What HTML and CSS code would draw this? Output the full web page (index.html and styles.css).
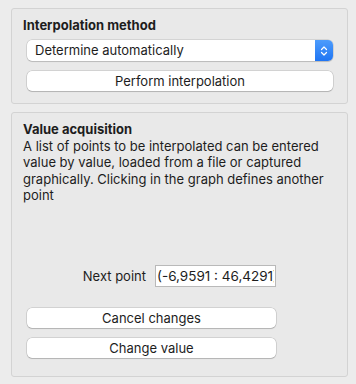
FILE: index.html
```html
<!DOCTYPE html>
<html>

<head>
  <meta charset="UTF-8">
  <title>Interpolation</title>
  <link rel="stylesheet" href="styles.css">
</head>

<body>
  <div class="wrapper">
    <div class="group method">
      <div class="group-title">Interpolation method</div>
      <div class="controls">
        <div class="select">
          <span class="select-value">Determine automatically</span>
          <span class="stepper">
            <svg width="8" height="12" viewBox="0 0 8 12">
              <path d="M1.5 4.5 L4 2 L6.5 4.5 M1.5 7.5 L4 10 L6.5 7.5" fill="none" stroke="#fff" stroke-width="1.2"
                stroke-linecap="round" stroke-linejoin="round" />
            </svg>
          </span>
        </div>
        <button class="btn">Perform interpolation</button>
      </div>
    </div>

    <div class="group acquisition">
      <div class="group-title">Value acquisition</div>
      <div class="description">
        A list of points to be interpolated can be entered value by value, loaded from a file or captured
        graphically. Clicking in the graph defines another point
      </div>
      <div class="form">
        <div class="form-row">
          <label for="nextPoint">Next point</label>
          <input type="text" id="nextPoint" value="(-6,9591 : 46,4291)" />
        </div>
        <button class="btn">Cancel changes</button>
        <button class="btn">Change value</button>
      </div>
    </div>
  </div>
</body>

</html>
```

FILE: styles.css
```css
html, body {
  margin: 0;
  background: #ececec;
}

body {
  font-family: Inter, "Liberation Sans", sans-serif;
  font-size: 13px;
  color: #1d1d1d;
  width: 356px;
  height: 384px;
  overflow: hidden;
}

.wrapper {
  padding: 8px 8px 0 11px;
  display: flex;
  flex-direction: column;
  gap: 8px;
}

.group {
  border: 1px solid #d3d3d3;
  border-radius: 3px;
  background: #e9e9e9;
  padding: 8px 11px 0 11px;
  box-sizing: border-box;
}

.method {
  height: 96px;
}

.acquisition {
  height: 265px;
  display: flex;
  flex-direction: column;
  padding-bottom: 18px;
}

.group-title {
  font-weight: 700;
  line-height: 16px;
}

.controls {
  margin: 7px 3px 0 4px;
  display: flex;
  flex-direction: column;
  gap: 10px;
}

.select {
  height: 21px;
  display: flex;
  background: #fff;
  border-radius: 5px;
  box-shadow: 0 0 0 0.5px rgba(0, 0, 0, 0.18), 0 1px 1px rgba(0, 0, 0, 0.12);
  overflow: hidden;
}

.select-value {
  flex: 1;
  padding-left: 8px;
  line-height: 21px;
}

.stepper {
  width: 18px;
  display: flex;
  align-items: center;
  justify-content: center;
  background: linear-gradient(#4d9cfc, #1f75f3);
}

.btn {
  height: 20px;
  padding: 0;
  font-family: inherit;
  font-size: 13px;
  color: #1d1d1d;
  background: #fff;
  border: none;
  border-radius: 5px;
  box-shadow: 0 0 0 0.5px rgba(0, 0, 0, 0.2), 0 1px 1px rgba(0, 0, 0, 0.15);
}

.description {
  margin-top: 1px;
  line-height: 16.3px;
}

.form {
  margin: auto 0 0 4px;
  width: 249px;
  display: flex;
  flex-direction: column;
  gap: 10px;
}

.form-row {
  display: flex;
  justify-content: flex-end;
  align-items: center;
  gap: 9px;
  margin-bottom: 11px;
}

.form-row input {
  width: 121px;
  height: 22px;
  box-sizing: border-box;
  border: 1px solid #b9b9b9;
  padding: 0 1px;
  font-family: inherit;
  font-size: 13.5px;
  color: #1d1d1d;
  outline: none;
}
```
